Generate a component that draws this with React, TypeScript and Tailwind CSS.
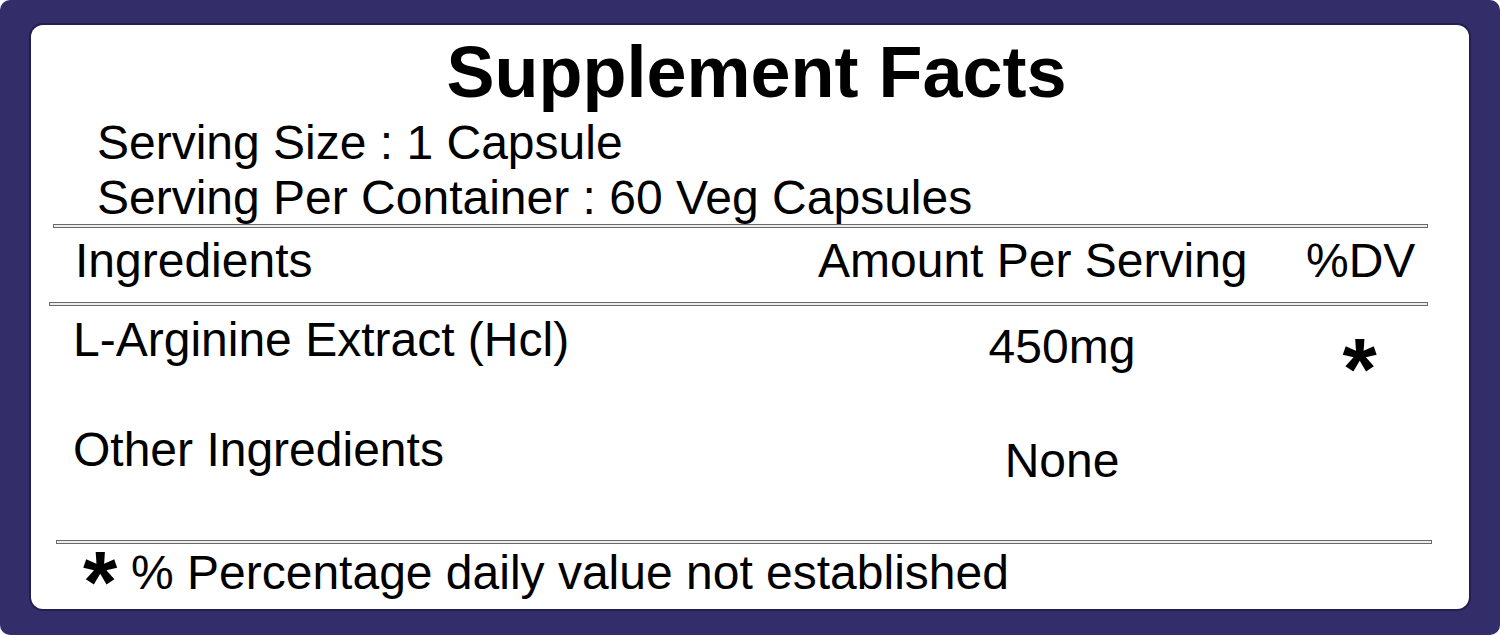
import React from "react";

const rows = [
    { name: "L-Arginine Extract (Hcl)", amount: "450mg", dv: "*", namePad: "pt-[9px]", amountPad: "pt-[16px]", height: "h-[110px]" },
    { name: "Other Ingredients", amount: "None", dv: "", namePad: "pt-[9px]", amountPad: "pt-[20px]", height: "h-[124px]" },
];

function Rule({ className }: { className: string }) {
    return <div className={`h-[4px] border border-[#6a6a6a] bg-[#ececec] ${className}`} />;
}

export default function App() {
    return (
        <div className="w-full h-[635px] bg-white">
            <div className="h-full rounded-[10px] bg-[#332e6a] pt-[25px] pl-[31px] pr-[31px] pb-[26px]">
                <div className="h-full rounded-[12px] bg-white shadow-[0_0_0_2px_#221e50] font-['Liberation_Sans',Arial,sans-serif] text-black">
                    <div className="pt-[11px] pl-[13px] text-center text-[72px] leading-[72px] font-bold">
                        Supplement Facts
                    </div>

                    <div className="mt-[7px] pl-[66px] text-[48px] leading-[55px]">
                        <div>Serving Size : 1 Capsule</div>
                        <div>Serving Per Container : 60 Veg Capsules</div>
                    </div>

                    <Rule className="mt-[-1px] ml-[22px] w-[1375px]" />

                    <div className="mt-[8px] pl-[42px] grid grid-cols-[745px_488px_107px] text-[48px] leading-[50px]">
                        <div className="pl-[2px]">Ingredients</div>
                        <div>Amount Per Serving</div>
                        <div>%DV</div>
                    </div>

                    <Rule className="mt-[16px] ml-[18px] w-[1379px]" />

                    {rows.map((row) => (
                        <div key={row.name} className={`pl-[42px] grid grid-cols-[745px_488px_107px] text-[48px] leading-[50px] ${row.height}`}>
                            <div className={row.namePad}>{row.name}</div>
                            <div className={`${row.amountPad} text-center`}>{row.amount}</div>
                            <div className="pt-[33px] text-center text-[88px] leading-[60px] font-bold">{row.dv}</div>
                        </div>
                    ))}

                    <Rule className="ml-[25px] w-[1376px]" />

                    <div className="mt-[4px] pl-[52px] flex items-start text-[48px] leading-[50px]">
                        <div className="w-[48px] pt-[14px] text-[88px] leading-[40px] font-bold">*</div>
                        <div>% Percentage daily value not established</div>
                    </div>
                </div>
            </div>
        </div>
    );
}
